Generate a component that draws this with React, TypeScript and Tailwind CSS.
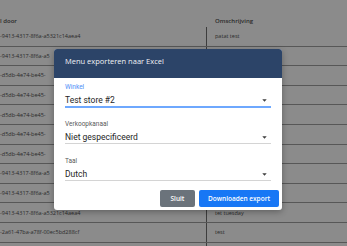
import React from "react";

const rows: [string, string][] = [
  ["-9413-4317-8f6a-a5321c14aea4", "patat test"],
  ["-9413-4317-8f6a-a5", ""],
  ["-d5db-4e74-be45-", ""],
  ["-d5db-4e74-be45-", ""],
  ["-d5db-4e74-be45-", ""],
  ["-d5db-4e74-be45-", ""],
  ["-d5db-4e74-be45-", ""],
  ["-9413-4317-8f6a-a5", ""],
  ["-9413-4317-8f6a-a5", ""],
  ["-9413-4317-8f6a-a5321c14aea4", "tet tuesday"],
  ["-2a61-47ba-a78f-00ec5bd288cf", "test"],
  ["", ""],
];

function Caret() {
  return (
    <svg width="5" height="3" viewBox="0 0 5 3" className="shrink-0">
      <path d="M0.3 0.3 L4.7 0.3 L2.5 2.8 Z" fill="#3f3f3f" />
    </svg>
  );
}

function Field({
  label,
  value,
  focused,
  className,
}: {
  label: string;
  value: string;
  focused?: boolean;
  className?: string;
}) {
  return (
    <div className={"flex flex-col " + (className ?? "")}>
      <div
        className={
          "h-[7px] text-[6.5px] leading-[7px] " +
          (focused ? "text-[#4d8ef7]" : "text-[#5a5a5a]")
        }
      >
        {label}
      </div>
      <div
        className={
          "mt-[3px] flex h-[12px] items-center justify-between pr-[4px] box-content " +
          (focused ? "border-b-2 border-[#6ea8fe]" : "border-b border-[#d4d4d4]")
        }
      >
        <span className="text-[8.5px] leading-[11px] text-[#262626]">{value}</span>
        <Caret />
      </div>
    </div>
  );
}

export default function App() {
  return (
    <div
      className="relative h-[246px] w-[347px] overflow-hidden bg-[#8b8b8b] text-[#2a2a2a]"
      style={{ fontFamily: '"Open Sans", Roboto, sans-serif' }}
    >
      {/* background table */}
      <div className="flex flex-col">
        <div className="flex h-[27px] items-center pt-[14px]">
          <div className="w-[207px] text-[6px] font-semibold leading-[12px]">l door</div>
          <div className="pl-[8px] text-[6px] font-semibold leading-[12px]">Omschrijving</div>
        </div>
        {rows.map(([a, b], i) => (
          <div key={i} className="flex h-[19.6px] border-b border-[#575757]">
            <div className="flex w-[207px] items-center border-r border-[#3d3d3d] text-[5.5px]">
              {a}
            </div>
            <div className="flex items-center pl-[8px] text-[5.5px]">{b}</div>
          </div>
        ))}
      </div>

      {/* modal */}
      <div
        className="absolute left-[54px] top-[49px] flex w-[228px] flex-col overflow-hidden rounded-[3px] bg-white shadow-[0_2px_6px_rgba(0,0,0,0.3)]"
        style={{ fontFamily: "Roboto, sans-serif" }}
      >
        <div
          className="h-[29px] bg-[#2c4468] px-[11px] pt-[8px] text-[7.5px] leading-[9px] text-[#f0f2f5]"
          style={{ fontFamily: '"Open Sans", sans-serif' }}
        >
          Menu exporteren naar Excel
        </div>
        <div className="flex flex-col px-[11px] pt-[6px]">
          <Field className="h-[37px]" label="Winkel" value="Test store #2" focused />
          <Field className="h-[37px]" label="Verkoopkanaal" value="Niet gespecificeerd" />
          <Field label="Taal" value="Dutch" />
        </div>
        <div
          className="flex justify-end gap-[4px] pr-[3px] pt-[9px] pb-[3px]"
          style={{ fontFamily: '"Open Sans", sans-serif' }}
        >
          <button className="h-[17px] w-[35px] rounded-[2px] bg-[#6b737b] text-[6.5px] font-semibold text-white">
            Sluit
          </button>
          <button className="h-[17px] w-[80px] rounded-[2px] bg-[#1877f5] text-[6.5px] font-semibold text-white">
            Downloaden export
          </button>
        </div>
      </div>
    </div>
  );
}
